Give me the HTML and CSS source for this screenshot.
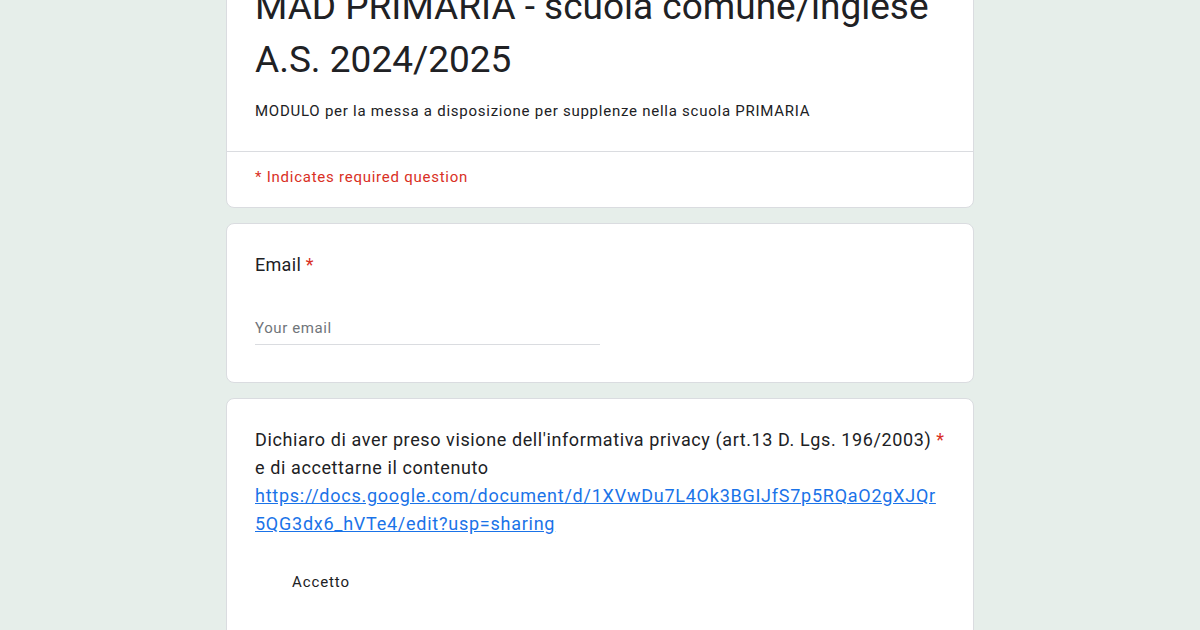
FILE: index.html
```html
<!DOCTYPE html>
<html lang="it">
  <head>
    <meta charset="UTF-8" />
    <meta name="viewport" content="width=device-width, initial-scale=1.0" />
    <title>MAD PRIMARIA - scuola comune/inglese A.S. 2024/2025</title>
    <link rel="stylesheet" href="styles.css">
  </head>
  <body>
    <div class="form">
      <div class="card header-card">
        <div class="header-top">
          <h1 class="form-title">MAD PRIMARIA - scuola comune/inglese A.S. 2024/2025</h1>
          <div class="form-desc">MODULO per la messa a disposizione per supplenze nella scuola PRIMARIA</div>
        </div>
        <div class="required-note">* Indicates required question</div>
      </div>

      <div class="card question">
        <div class="question-title">Email <span class="req">*</span></div>
        <div class="text-input">Your email</div>
      </div>

      <div class="card question privacy">
        <div class="question-title">Dichiaro di aver preso visione dell'informativa privacy (art.13 D. Lgs. 196/2003) <span class="req">*</span><br>e di accettarne il contenuto<br><a class="link" href="#">https://docs.google.com/document/d/1XVwDu7L4Ok3BGIJfS7p5RQaO2gXJQr5QG3dx6_hVTe4/edit?usp=sharing</a></div>
        <div class="choice">Accetto</div>
      </div>
    </div>
  </body>
</html>
```

FILE: styles.css
```css
body {
  margin: 0;
  padding: 0;
  background-color: #e6eeea;
  font-family: Roboto, Arial, sans-serif;
  color: #202124;
  overflow: hidden;
}
.form {
  width: 748px;
  margin: -42px auto 0;
  display: flex;
  flex-direction: column;
  gap: 15px;
}
.card {
  background-color: #fff;
  border: 1px solid #dadce0;
  border-radius: 8px;
  box-sizing: border-box;
}
.header-top {
  padding: 21px 28px 30px;
  border-bottom: 1px solid #dadce0;
}
.form-title {
  margin: 0;
  font-weight: 400;
  font-size: 37px;
  line-height: 53px;
  letter-spacing: 0;
}
.form-desc {
  margin-top: 15px;
  font-size: 15px;
  line-height: 20px;
  letter-spacing: 0.75px;
}
.required-note {
  padding: 15px 28px 20px;
  font-size: 15px;
  line-height: 20px;
  letter-spacing: 0.75px;
  color: #d93025;
}
.question {
  padding: 29px 28px 37px;
}
.question-title {
  font-size: 18px;
  line-height: 24px;
  letter-spacing: 0.3px;
}
.req {
  color: #d93025;
}
.text-input {
  margin-top: 41px;
  width: 345px;
  padding-bottom: 6px;
  border-bottom: 1px solid #dadce0;
  font-size: 15px;
  line-height: 20px;
  letter-spacing: 0.6px;
  color: #70757a;
}
.privacy {
  padding-top: 27px;
  padding-bottom: 60px;
}
.privacy .question-title {
  line-height: 28px;
  letter-spacing: 0.6px;
}
.link {
  color: #1a73e8;
  text-decoration: underline;
  letter-spacing: 0.75px;
  word-break: break-all;
}
.choice {
  margin-top: 34px;
  padding-left: 37px;
  font-size: 15px;
  line-height: 20px;
  letter-spacing: 0.9px;
}
```
